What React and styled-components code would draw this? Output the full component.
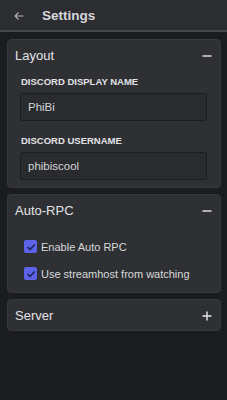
import React from "react";
import styled, { createGlobalStyle } from "styled-components";

const Global = createGlobalStyle`
  html, body { margin: 0; padding: 0; background: #1b1c1f; }
  body { font-family: "Liberation Sans", Arial, sans-serif; color: #dcdde0; }
  * { box-sizing: border-box; }
`;

const Page = styled.div`
  width: 227px;
  min-height: 400px;
  background: #1b1c1f;
`;

const Header = styled.div`
  height: 32px;
  display: flex;
  align-items: center;
  background: #2c2d31;
  border-bottom: 2px solid #46474b;
  padding-left: 14px;
  padding-top: 1px;
  gap: 18px;
`;

const Back = styled.span`
  display: flex;
  align-items: center;
`;

const Title = styled.div`
  font-size: 13.5px;
  font-weight: bold;
  color: #d6d7da;
`;

const Body = styled.div`
  padding: 7px 6px 7px 7px;
  display: flex;
  flex-direction: column;
  gap: 6px;
`;

const Card = styled.div`
  background: #2f3034;
  border: 1px solid #37383c;
  border-radius: 4px;
  padding-bottom: ${(p) => p.$pb || 0}px;
`;

const CardHead = styled.div`
  height: 30px;
  display: flex;
  align-items: center;
  justify-content: space-between;
  padding: 1px 8px 0 7px;
  font-size: 13px;
  color: #e2e3e6;
`;

const Toggle = styled.span`
  display: flex;
  align-items: center;
`;

const Field = styled.div`
  padding: 0 13px 0 12px;
  margin-top: ${(p) => p.$mt || 0}px;
`;

const Label = styled.div`
  font-size: 9.5px;
  font-weight: bold;
  color: #e2e3e6;
  height: 11px;
  line-height: 11px;
  margin-bottom: 6px;
  padding-left: 1px;
`;

const Input = styled.div`
  height: 28px;
  border: 1px solid #1c1d20;
  background: #2a2b2f;
  border-radius: 2px;
  display: flex;
  align-items: center;
  padding-left: 7px;
  font-size: 11.5px;
  color: #d4d5d8;
`;

const Checks = styled.div`
  padding: 15px 16px 0;
  display: flex;
  flex-direction: column;
  gap: 14px;
`;

const CheckRow = styled.div`
  display: flex;
  align-items: center;
  gap: 4px;
  height: 13px;
  font-size: 11px;
  color: #d8d9dc;
`;

const Box = styled.span`
  width: 13px;
  height: 13px;
  border-radius: 2px;
  background: #5c63e8;
  display: flex;
  align-items: center;
  justify-content: center;
`;

const Minus = () => (
  <svg width="10" height="10" viewBox="0 0 10 10">
    <path d="M0.5 5h9" stroke="#e8e8ea" strokeWidth="1.4" />
  </svg>
);
const Plus = () => (
  <svg width="10" height="10" viewBox="0 0 10 10">
    <path d="M0.5 5h9M5 0.5v9" stroke="#e8e8ea" strokeWidth="1.4" />
  </svg>
);
const Check = () => (
  <svg width="10" height="10" viewBox="0 0 10 10">
    <path d="M1.5 5l2.5 2.5L8.8 2.5" stroke="#1e2050" strokeWidth="1.4" fill="none" />
  </svg>
);
const Arrow = () => (
  <svg width="10" height="8" viewBox="0 0 10 8">
    <path d="M9.5 4H1M4.5 0.5L1 4l3.5 3.5" stroke="#b4b5b8" strokeWidth="1.1" fill="none" />
  </svg>
);

export default function App() {
  return (
    <Page>
      <Global />
      <Header>
        <Back><Arrow /></Back>
        <Title>Settings</Title>
      </Header>
      <Body>
        <Card $pb={7}>
          <CardHead>
            Layout
            <Toggle><Minus /></Toggle>
          </CardHead>
          <Field $mt={6}>
            <Label>DISCORD DISPLAY NAME</Label>
            <Input>PhiBi</Input>
          </Field>
          <Field $mt={14}>
            <Label>DISCORD USERNAME</Label>
            <Input>phibiscool</Input>
          </Field>
        </Card>
        <Card $pb={12}>
          <CardHead>
            Auto-RPC
            <Toggle><Minus /></Toggle>
          </CardHead>
          <Checks>
            <CheckRow><Box><Check /></Box>Enable Auto RPC</CheckRow>
            <CheckRow><Box><Check /></Box>Use streamhost from watching</CheckRow>
          </Checks>
        </Card>
        <Card>
          <CardHead>
            Server
            <Toggle><Plus /></Toggle>
          </CardHead>
        </Card>
      </Body>
    </Page>
  );
}
